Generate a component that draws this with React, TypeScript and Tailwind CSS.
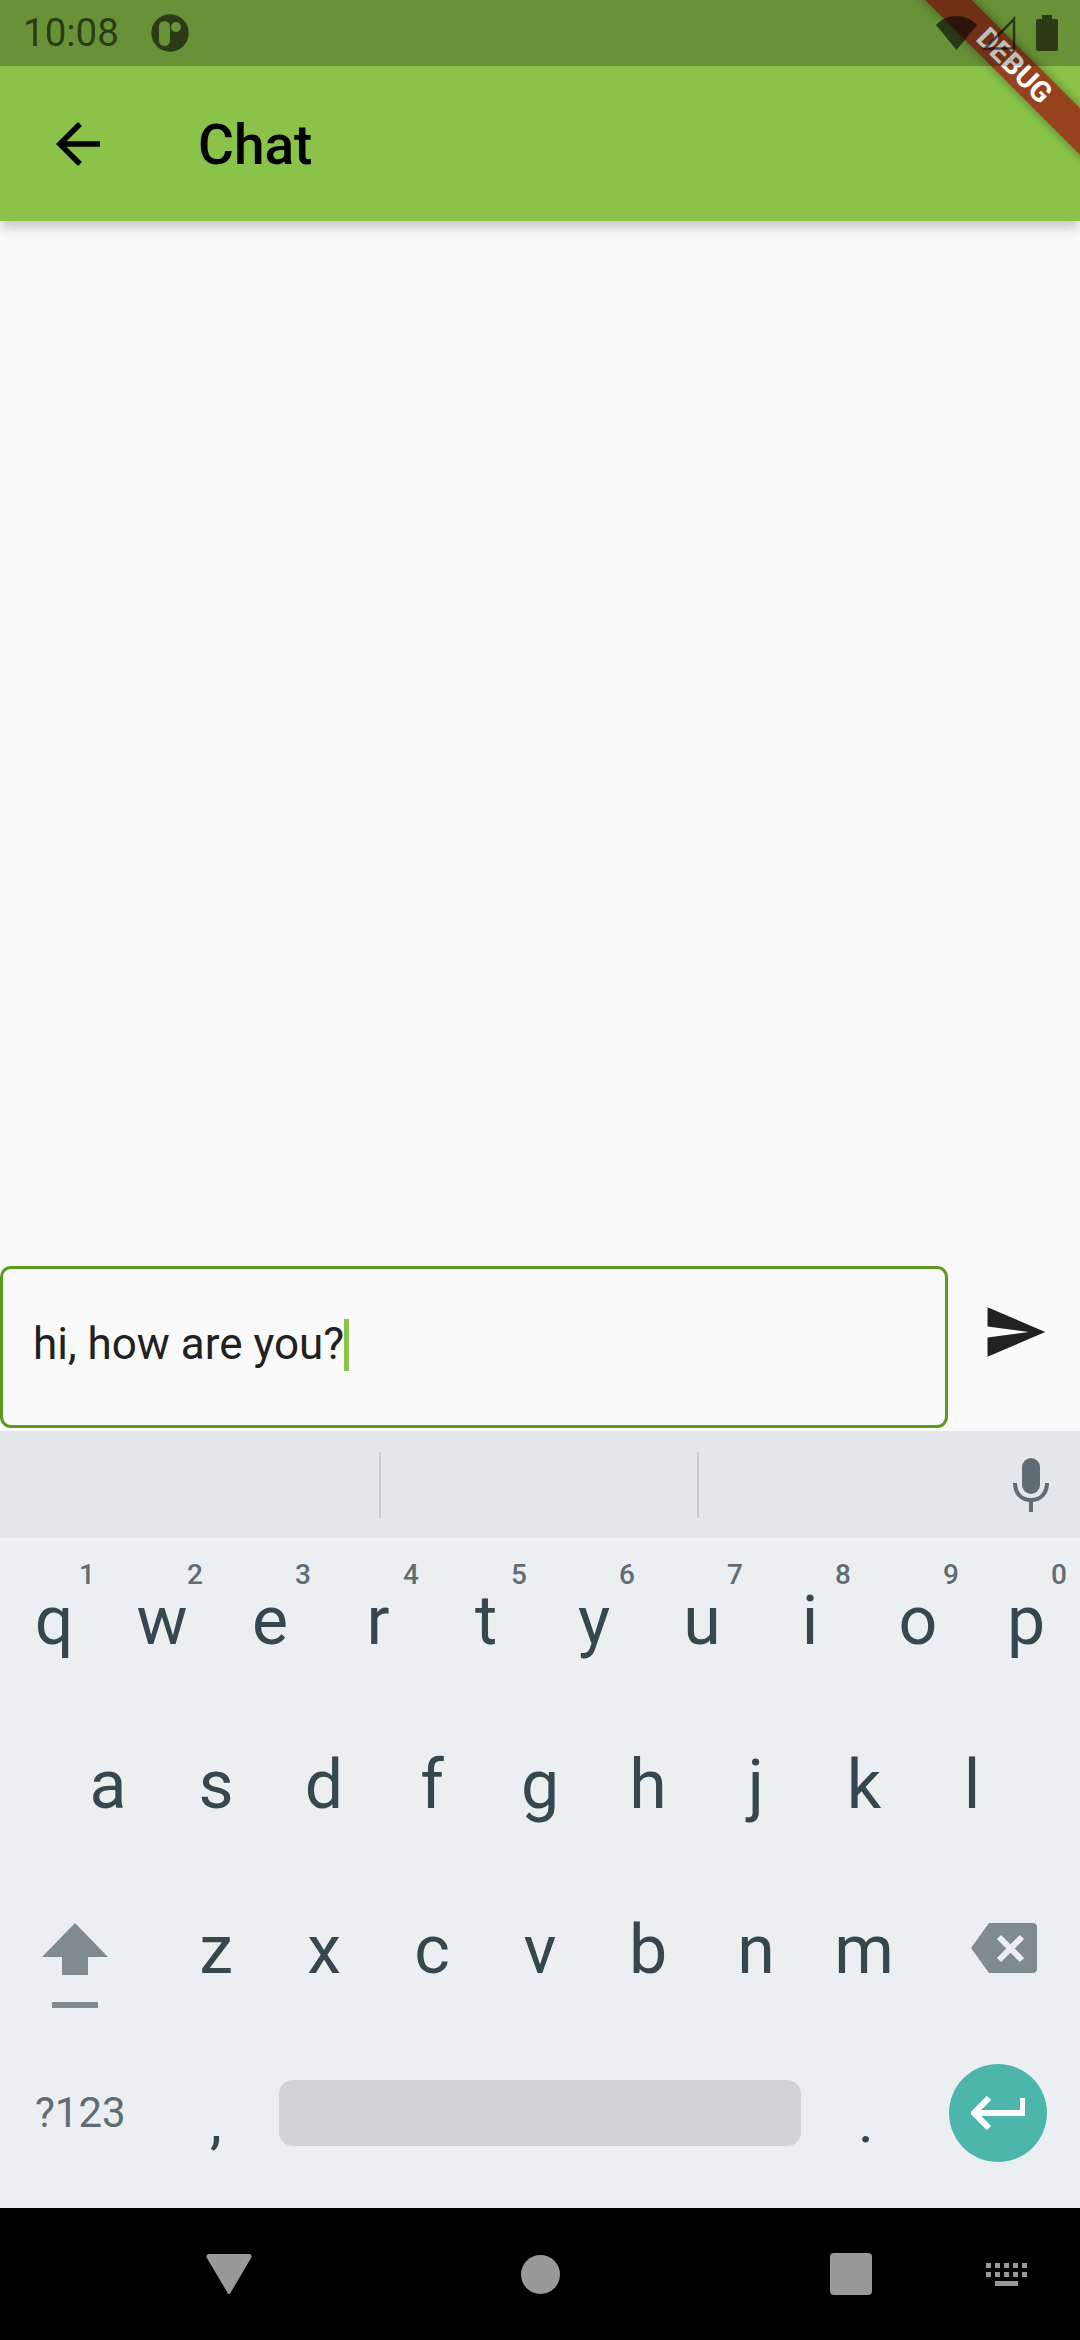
const rowOne = [
    ['q', '1'], ['w', '2'], ['e', '3'], ['r', '4'], ['t', '5'],
    ['y', '6'], ['u', '7'], ['i', '8'], ['o', '9'], ['p', '0'],
];
const rowTwo = ['a', 's', 'd', 'f', 'g', 'h', 'j', 'k', 'l'];
const rowThree = ['z', 'x', 'c', 'v', 'b', 'n', 'm'];

// system status bar sits on top of the app (and of the debug ribbon), so it only darkens what's under it
function StatusBar() {
    return (
        <div className="absolute z-30 top-0 left-0 w-full h-[66px] bg-black/25 flex items-center pl-[23px] text-black/60">
            <span className="text-[38.5px] leading-none">10:08</span>
            <svg width="38" height="38" viewBox="0 0 38 38" className="ml-[32px]">
                <circle cx="19" cy="19" r="18.7" fill="#2c3a16" />
                <rect x="8" y="7" width="11" height="25" rx="5.5" fill="#699138" />
                <circle cx="25" cy="13" r="5" fill="#699138" />
            </svg>
            <div className="ml-auto flex items-center pr-[22px]">
                <svg width="42" height="36" viewBox="0 0 42 36">
                    <path d="M0 10 C11 -2 30 -2 41 10 L20.5 35 Z" fill="#000000" fillOpacity="0.6" />
                </svg>
                <svg width="34" height="34" viewBox="0 0 34 34" className="ml-[4px]">
                    <path d="M32 3 V32.5 H3 Z" fill="none" stroke="#000000" strokeOpacity="0.6" strokeWidth="2.5" />
                </svg>
                <div className="ml-[20px] relative w-[22px] h-[32px] mt-[3px] rounded-[2px] bg-[#2c3a16]">
                    <div className="absolute top-[-4px] left-[6px] w-[10px] h-[4px] bg-[#2c3a16]" />
                </div>
            </div>
        </div>
    );
}

function AppBar() {
    return (
        <div className="relative z-10 h-[221px] pt-[66px] shrink-0 bg-[#8bc34a] flex items-center text-black shadow-[0_6px_12px_rgba(0,0,0,0.22)]">
            <svg width="66" height="66" viewBox="0 0 24 24" className="ml-[45px]">
                <path d="M20 11H7.83l5.59-5.59L12 4l-8 8 8 8 1.41-1.41L7.83 13H20v-2z" fill="#000000" />
            </svg>
            <span className="ml-[87px] mt-[3px] text-[55px] font-medium leading-none">Chat</span>
        </div>
    );
}

function InputRow() {
    return (
        <div className="h-[165px] shrink-0 flex items-start bg-[#fafafa]">
            <div className="w-[948px] h-[162px] rounded-[11px] border-[3px] border-[#5c9a1e] flex items-center pl-[30px] text-[#212121]">
                <span className="text-[44px] leading-none mb-[6px]">hi, how are you?</span>
                <span className="w-[5px] h-[52px] mb-[4px] bg-[#8bc34a]" />
            </div>
            <svg width="66" height="66" viewBox="0 0 24 24" className="ml-[34px] mt-[33px]">
                <path d="M2.01 21L23 12 2.01 3 2 10l15 2-15 2z" fill="#212121" />
            </svg>
        </div>
    );
}

function SuggestionStrip() {
    return (
        <div className="h-[110px] shrink-0 bg-[#e4e7ea] flex items-center border-b-[3px] border-b-[#f3f5f6]">
            <div className="w-[2px] h-[66px] ml-[379px] bg-[#c9cdd0]" />
            <div className="w-[2px] h-[66px] ml-[316px] bg-[#c9cdd0]" />
            <svg width="36" height="54" viewBox="0 0 36 54" className="ml-[314px]">
                <rect x="9" y="0" width="18" height="36" rx="9" fill="#5f6c74" />
                <path d="M2 25 C2 36 9 42 18 42 C27 42 34 36 34 25" fill="none" stroke="#5f6c74" strokeWidth="4" />
                <rect x="16" y="40" width="4" height="14" fill="#5f6c74" />
            </svg>
        </div>
    );
}

function Letter({ label }: { label: string }) {
    return <div className="w-[108px] text-center text-[68px] leading-none text-[#37474f]">{label}</div>;
}

function Keyboard() {
    return (
        <div className="h-[667px] shrink-0 bg-[#eceff2] flex flex-col">
            <div className="h-[164px] flex items-start pt-[46px]">
                {rowOne.map(([letter, hint]) => (
                    <div key={letter} className="relative">
                        <Letter label={letter} />
                        <span className="absolute top-[-26px] right-[10px] w-[22px] text-center text-[28px] leading-none font-medium text-[#5f6e75]">{hint}</span>
                    </div>
                ))}
            </div>
            <div className="h-[165px] flex items-start justify-center pt-[46px]">
                {rowTwo.map((letter) => <Letter key={letter} label={letter} />)}
            </div>
            <div className="h-[165px] flex items-start pt-[46px]">
                <div className="w-[162px] flex flex-col items-center">
                    <svg width="66" height="52" viewBox="0 0 66 52" className="ml-[-12px] mt-[7px]">
                        <path d="M33 0 L66 34 H46 V52 H20 V34 H0 Z" fill="#7f8b8f" />
                    </svg>
                    <div className="w-[46px] h-[6px] mt-[27px] ml-[-12px] bg-[#7f8b8f]" />
                </div>
                {rowThree.map((letter) => <Letter key={letter} label={letter} />)}
                <svg width="66" height="50" viewBox="0 0 66 50" className="ml-[53px] mt-[7px]">
                    <path d="M18 0 H62 a4 4 0 0 1 4 4 V46 a4 4 0 0 1 -4 4 H18 L0 25 Z" fill="#7f8b8f" />
                    <path d="M28 14 L51 37 M51 14 L28 37" stroke="#eceff2" strokeWidth="6" />
                </svg>
            </div>
            <div className="h-[173px] pb-[17px] flex items-center">
                <span className="ml-[35px] w-[91px] text-[42px] leading-none text-[#5f6e75]">?123</span>
                <span className="w-[180px] text-center text-[60px] leading-none text-[#37474f] mt-[18px]">,</span>
                <div className="ml-[-27px] w-[522px] h-[66px] rounded-[14px] bg-[#d0d4d7]" />
                <span className="w-[130px] text-center text-[60px] leading-none text-[#37474f] mt-[18px]">.</span>
                <div className="ml-[18px] w-[98px] h-[98px] rounded-full bg-[#4db6ac] flex items-center justify-center">
                    <svg width="54" height="34" viewBox="0 0 54 34" fill="none" stroke="#ffffff" strokeWidth="6">
                        <path d="M52 2 V17 H4 M18 2 L3 17 L18 32" />
                    </svg>
                </div>
            </div>
        </div>
    );
}

function NavBar() {
    return (
        <div className="h-[132px] shrink-0 bg-black flex items-center">
            <svg width="46" height="40" viewBox="0 0 46 40" className="ml-[206px] mt-[-1px]">
                <path d="M3 0 H43 a2.5 2.5 0 0 1 2.4 3.4 L25 38 a2 2 0 0 1 -4 0 L0.6 3.4 A2.5 2.5 0 0 1 3 0 Z" fill="#999999" />
            </svg>
            <div className="ml-[269px] w-[39px] h-[39px] rounded-full bg-[#999999]" />
            <div className="ml-[270px] w-[42px] h-[42px] rounded-[4px] bg-[#999999]" />
            <svg width="42" height="23" viewBox="0 0 42 23" fill="#999999" className="ml-[114px]">
                {[0, 9, 18, 27, 36].map((x) => <rect key={x} x={x} y="0" width="5" height="5" />)}
                {[0, 9, 18, 27, 36].map((x) => <rect key={x} x={x} y="9" width="5" height="5" />)}
                <rect x="9" y="18" width="23" height="5" />
            </svg>
        </div>
    );
}

export default function App() {
    return (
        <div className="relative w-[1080px] h-[2340px] overflow-hidden flex flex-col bg-[#fafafa] font-['Roboto',sans-serif]">
            <AppBar />
            <div className="flex-1" />
            <InputRow />
            <SuggestionStrip />
            <Keyboard />
            <NavBar />
            {/* flutter debug ribbon */}
            <div className="absolute z-20 left-[845px] top-[40px] w-[320px] h-[33px] rotate-45 bg-[#96421f] shadow-[0_0_12px_rgba(0,0,0,0.35)] flex items-center justify-center">
                <span className="ml-[26px] text-[29px] font-bold leading-none text-white">DEBUG</span>
            </div>
            <StatusBar />
        </div>
    );
}
